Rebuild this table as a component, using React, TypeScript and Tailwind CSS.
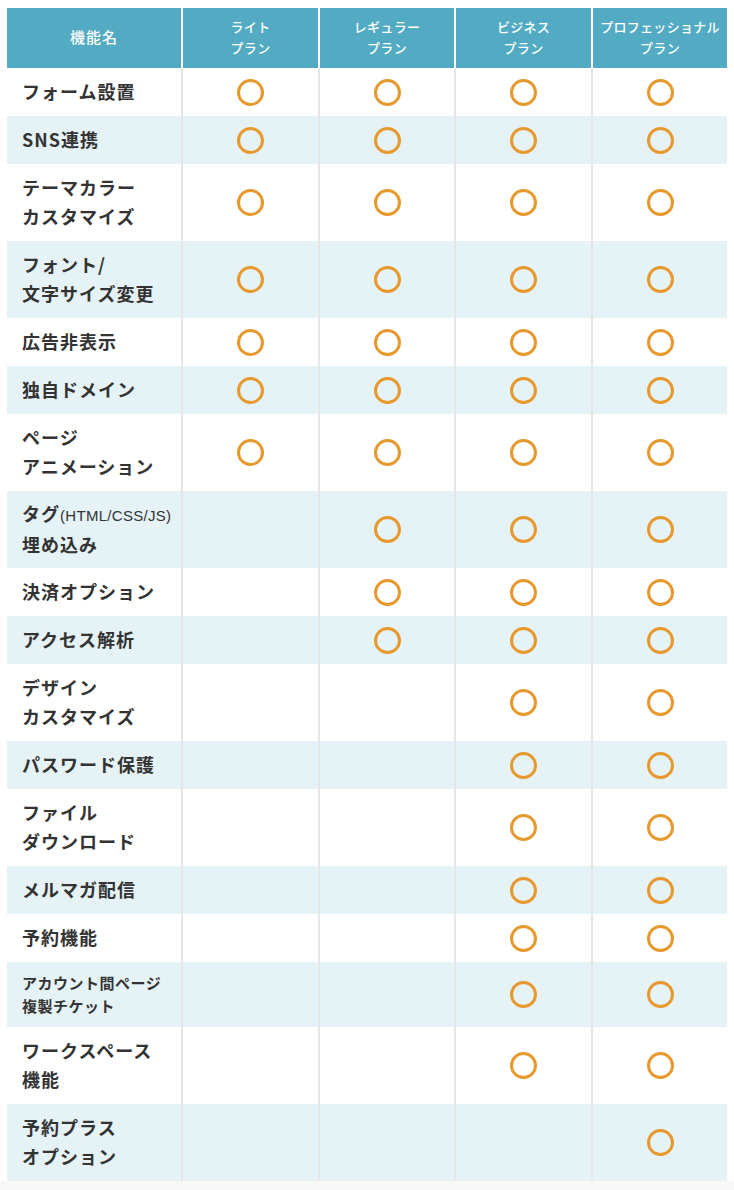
import React from "react";

type Row = {
  label: React.ReactNode;
  marks: boolean[];
  kind: "single" | "double" | "small";
};

const rows: Row[] = [
  { label: "フォーム設置", marks: [true, true, true, true], kind: "single" },
  { label: "SNS連携", marks: [true, true, true, true], kind: "single" },
  { label: <>テーマカラー<br />カスタマイズ</>, marks: [true, true, true, true], kind: "double" },
  { label: <>フォント/<br />文字サイズ変更</>, marks: [true, true, true, true], kind: "double" },
  { label: "広告非表示", marks: [true, true, true, true], kind: "single" },
  { label: "独自ドメイン", marks: [true, true, true, true], kind: "single" },
  { label: <>ページ<br />アニメーション</>, marks: [true, true, true, true], kind: "double" },
  {
    label: (
      <>
        タグ
        <span
          className="text-[15px] font-medium tracking-[0.3px]"
          style={{ fontFamily: '"Liberation Sans", Arial, sans-serif' }}
        >
          (HTML/CSS/JS)
        </span>
        <br />埋め込み
      </>
    ),
    marks: [false, true, true, true],
    kind: "double",
  },
  { label: "決済オプション", marks: [false, true, true, true], kind: "single" },
  { label: "アクセス解析", marks: [false, true, true, true], kind: "single" },
  { label: <>デザイン<br />カスタマイズ</>, marks: [false, false, true, true], kind: "double" },
  { label: "パスワード保護", marks: [false, false, true, true], kind: "single" },
  { label: <>ファイル<br />ダウンロード</>, marks: [false, false, true, true], kind: "double" },
  { label: "メルマガ配信", marks: [false, false, true, true], kind: "single" },
  { label: "予約機能", marks: [false, false, true, true], kind: "single" },
  { label: <>アカウント間ページ<br />複製チケット</>, marks: [false, false, true, true], kind: "small" },
  { label: <>ワークスペース<br />機能</>, marks: [false, false, true, true], kind: "double" },
  { label: <>予約プラス<br />オプション</>, marks: [false, false, false, true], kind: "double" },
];

const plans: React.ReactNode[] = [
  <>ライト<br />プラン</>,
  <>レギュラー<br />プラン</>,
  <>ビジネス<br />プラン</>,
  <>プロフェッショナル<br />プラン</>,
];

function Circle() {
  return <div className="w-[27px] h-[27px] rounded-full border-[3px] border-[#e8992e]" />;
}

export default function App() {
  return (
    <div
      className="w-[734px] bg-white"
      style={{ fontFamily: '"Noto Sans CJK JP", "Noto Sans", sans-serif' }}
    >
      <div className="px-[7px] pt-[8px]">
        <div className="grid grid-cols-[174px_135px_134px_135px_134px] gap-x-[2px] bg-white h-[60px]">
          <div className="bg-[#52abc2] flex items-center justify-center pb-[2px] text-white text-[15px] font-medium tracking-[1px]">
            機能名
          </div>
          {plans.map((p, i) => (
            <div
              key={i}
              className="bg-[#52abc2] flex items-center justify-center pb-[2px] text-center text-white text-[13px] leading-[21px] font-medium tracking-[0.3px]"
            >
              <div>{p}</div>
            </div>
          ))}
        </div>
        {rows.map((r, i) => {
          const bg = i % 2 === 0 ? "bg-white" : "bg-[#e5f2f6]";
          const h = r.kind === "single" ? "h-[48px]" : r.kind === "small" ? "h-[65px]" : "h-[77px]";
          const text =
            r.kind === "small"
              ? "text-[15px] leading-[23px] tracking-[0.5px]"
              : "text-[18px] leading-[29px] tracking-[1px]";
          return (
            <div
              key={i}
              className={`grid grid-cols-[174px_135px_134px_135px_134px] gap-x-[2px] bg-[#e6e6e6] ${h}`}
            >
              <div className={`${bg} flex items-center pl-[15px] pb-[2px] text-[#333333] font-bold ${text}`}>
                <div>{r.label}</div>
              </div>
              {r.marks.map((m, j) => (
                <div key={j} className={`${bg} flex items-center justify-center`}>
                  {m ? <Circle /> : null}
                </div>
              ))}
            </div>
          );
        })}
      </div>
      <div className="h-[10px] bg-[#f8f8f8]" />
    </div>
  );
}
